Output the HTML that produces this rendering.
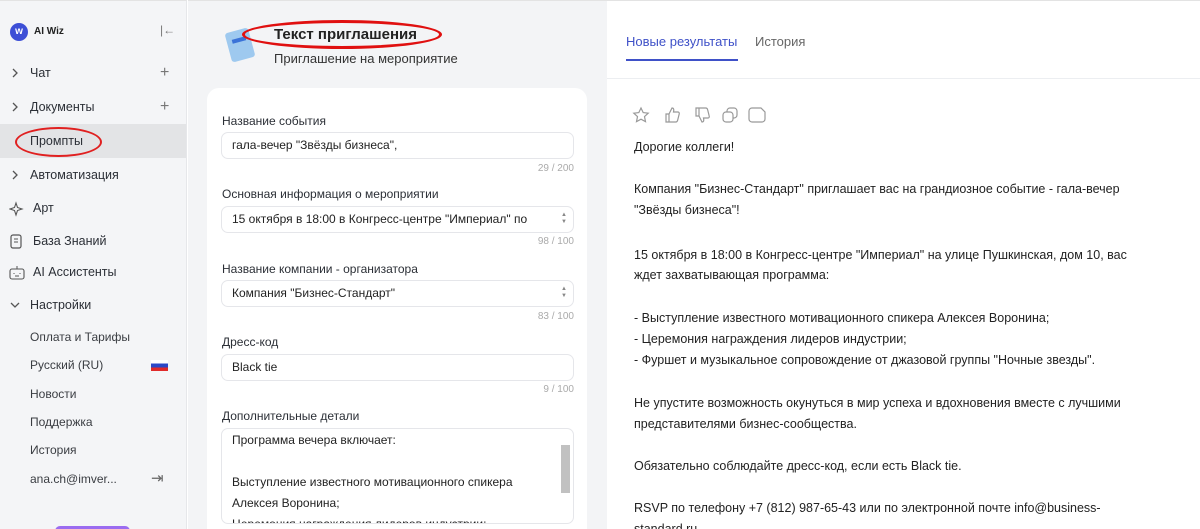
<!DOCTYPE html>
<html><head><meta charset="utf-8"><style>
*{box-sizing:border-box;margin:0;padding:0}
html,body{width:1200px;height:529px;overflow:hidden}
body{font-family:"Liberation Sans",sans-serif;background:#fff;position:relative;color:#1f2328}
.sb{position:absolute;left:0;top:0;width:187px;height:529px;background:#f4f5f7;border-right:1px solid #e6e7ea;border-top:1px solid #e3e3e3}
.it{position:absolute;left:0;width:186px;height:34px;font-size:12.5px;line-height:34px;color:#2b2f36}
.it .l{position:absolute;left:30px}
.it svg{position:absolute;left:9px;top:10px}
.it .p{position:absolute;left:160px;color:#777;font-size:16px}
.sub{position:absolute;left:30px;font-size:12px;color:#3a3d42}
.mid{position:absolute;left:188px;top:0;width:419px;height:529px;background:#f3f4f6;border-top:1px solid #e3e3e3}
.card{position:absolute;left:207px;top:88px;width:380px;height:441px;background:#fff;border-radius:12px 12px 0 0}
.lab{position:absolute;left:222px;font-size:12px;color:#2b2f36}
.inp{position:absolute;left:221px;width:353px;height:27px;border:1px solid #e5e6ea;border-radius:7px;font-size:12px;line-height:25px;padding-left:10px;color:#222}
.cnt{position:absolute;right:626px;font-size:10px;color:#aaa}
.arr{position:absolute;right:4px;width:8px;font-size:6px;color:#888;line-height:7px;top:5px}
.rp{position:absolute;left:607px;top:0;width:593px;height:529px;background:#fff;border-top:1px solid #e3e3e3}
.txt{position:absolute;left:634px;font-size:12.5px;color:#222;white-space:nowrap}
</style></head><body>
<div class="sb">
 <div style="position:absolute;left:10px;top:22px;width:18px;height:18px;border-radius:50%;background:#3d4fd6;color:#fff;font-size:10px;font-weight:bold;text-align:center;line-height:18px">w</div>
 <div style="position:absolute;left:34px;top:25px;font-size:10px;font-weight:bold;color:#222">AI Wiz</div>
 <div style="position:absolute;left:160px;top:22px;font-size:12px;color:#777">|←</div>
 <div class="it" style="top:55px"><svg width="12" height="14" viewBox="0 0 12 14"><path d="M4 3l4 4-4 4" fill="none" stroke="#555" stroke-width="1.3"/></svg><span class="l">Чат</span><span class="p">+</span></div>
 <div class="it" style="top:89px"><svg width="12" height="14" viewBox="0 0 12 14"><path d="M4 3l4 4-4 4" fill="none" stroke="#555" stroke-width="1.3"/></svg><span class="l">Документы</span><span class="p">+</span></div>
 <div class="it" style="top:123px;background:#e3e4e6"><span class="l">Промпты</span></div>
 <div style="position:absolute;left:15px;top:126px;width:87px;height:30px;border:2px solid #e02020;border-radius:50%"></div>
 <div class="it" style="top:157px"><svg width="12" height="14" viewBox="0 0 12 14"><path d="M4 3l4 4-4 4" fill="none" stroke="#555" stroke-width="1.3"/></svg><span class="l">Автоматизация</span></div>
 <div class="it" style="top:190px"><svg width="18" height="16" viewBox="0 0 18 16"><path d="M7 2l1.5 4.5L13 8l-4.5 1.5L7 14 5.5 9.5 1 8l4.5-1.5z" fill="none" stroke="#555" stroke-width="1.1"/></svg><span class="l" style="left:33px">Арт</span></div>
 <div class="it" style="top:223px"><svg width="14" height="16" viewBox="0 0 14 16"><rect x="2" y="1" width="10" height="13" rx="2" fill="none" stroke="#555" stroke-width="1.2"/><path d="M5 5h4M5 8h4" stroke="#555"/></svg><span class="l" style="left:33px">База Знаний</span></div>
 <div class="it" style="top:254px"><svg width="16" height="16" viewBox="0 0 16 16"><rect x="1" y="4" width="14" height="10" rx="2" fill="none" stroke="#555" stroke-width="1.1"/><path d="M8 1v3M5 8v1M11 8v1M6 11h4" stroke="#555"/></svg><span class="l" style="left:33px">AI Ассистенты</span></div>
 <div class="it" style="top:287px"><svg width="12" height="14" viewBox="0 0 12 14"><path d="M2 5l4 4 4-4" fill="none" stroke="#555" stroke-width="1.3"/></svg><span class="l">Настройки</span></div>
 <div class="sub" style="top:329px">Оплата и Тарифы</div>
 <div class="sub" style="top:357px">Русский (RU)</div>
 <div style="position:absolute;left:151px;top:359px;width:17px;height:11px;background:linear-gradient(#fff 0 33%,#2b48c7 33% 66%,#e02a2a 66%)"></div>
 <div class="sub" style="top:386px">Новости</div>
 <div class="sub" style="top:414px">Поддержка</div>
 <div class="sub" style="top:442px">История</div>
 <div class="sub" style="top:471px">ana.ch@imver...</div>
 <div style="position:absolute;left:151px;top:468px;font-size:15px;color:#666">⇥</div>
 <div style="position:absolute;left:55px;top:525px;width:75px;height:10px;border-radius:6px;background:#9b6cf0"></div>
</div>
<div class="mid"></div>
<div style="position:absolute;left:228px;top:30px;width:24px;height:30px;background:#9ec9ef;border-radius:3px;transform:rotate(-15deg)"></div>
<div style="position:absolute;left:232px;top:38px;width:14px;height:4px;background:#3a72d8;transform:rotate(-15deg)"></div>
<div style="position:absolute;left:274px;top:26px;font-size:15px;font-weight:bold;color:#222">Текст приглашения</div>
<div style="position:absolute;left:242px;top:20px;width:200px;height:29px;border:3px solid #e01010;border-radius:50%"></div>
<div style="position:absolute;left:274px;top:51px;font-size:13px;color:#333">Приглашение на мероприятие</div>
<div class="card"></div>
<div class="lab" style="top:114px">Название события</div>
<div class="inp" style="top:132px">гала-вечер "Звёзды бизнеса",</div>
<div class="cnt" style="top:163px">29 / 200</div>
<div class="lab" style="top:187px">Основная информация о мероприятии</div>
<div class="inp" style="top:206px">15 октября в 18:00 в Конгресс-центре "Империал" по<div class="arr">▲<br>▼</div></div>
<div class="cnt" style="top:236px">98 / 100</div>
<div class="lab" style="top:262px">Название компании - организатора</div>
<div class="inp" style="top:280px">Компания "Бизнес-Стандарт"<div class="arr">▲<br>▼</div></div>
<div class="cnt" style="top:311px">83 / 100</div>
<div class="lab" style="top:335px">Дресс-код</div>
<div class="inp" style="top:354px">Black tie</div>
<div class="cnt" style="top:384px">9 / 100</div>
<div class="lab" style="top:409px">Дополнительные детали</div>
<div class="inp" style="top:428px;height:96px;line-height:21px;padding-top:1px;overflow:hidden">Программа вечера включает:<br><br>Выступление известного мотивационного спикера<br>Алексея Воронина;<br>Церемония награждения лидеров индустрии;
 <div style="position:absolute;right:3px;top:16px;width:9px;height:48px;background:#c1c1c1"></div></div>
<div class="rp">
 <div style="position:absolute;left:0;top:77px;width:593px;height:1px;background:#eceef1"></div>
 <div style="position:absolute;left:19px;top:33px;font-size:13px;color:#3f51c8">Новые результаты</div>
 <div style="position:absolute;left:19px;top:58px;width:112px;height:2px;background:#3f51c8"></div>
 <div style="position:absolute;left:148px;top:33px;font-size:13px;color:#666">История</div>
 <svg style="position:absolute;left:25px;top:105px" width="140" height="18" viewBox="0 0 140 18" fill="none" stroke="#999" stroke-width="1.2">
  <path d="M9 2l2.2 4.6 5 .6-3.7 3.4 1 5L9 13.2 4.5 15.6l1-5L1.8 7.2l5-.6z"/>
  <path d="M34 8h3v8h-3zM37 8l3-6c2 0 2 2 1.5 4H46c1 0 1.5 1 1.2 2l-1.5 6c-.2 1-1 2-2 2H37"/>
  <path d="M64 10h3V2h-3zM67 10l3 6c2 0 2-2 1.5-4H76c1 0 1.5-1 1.2-2l-1.5-6c-.2-1-1-2-2-2H67"/>
  <rect x="95" y="2" width="10" height="10" rx="3"/><rect x="91" y="6" width="10" height="10" rx="3" fill="#fff"/>
  <path d="M120 2h9l4 4v7a3 3 0 0 1-3 3h-10a3 3 0 0 1-3-3V5a3 3 0 0 1 3-3z"/>
 </svg>
</div>
<div class="txt" style="top:140px">Дорогие коллеги!</div>
<div class="txt" style="top:182px">Компания "Бизнес-Стандарт" приглашает вас на грандиозное событие - гала-вечер</div>
<div class="txt" style="top:203px">"Звёзды бизнеса"!</div>
<div class="txt" style="top:248px">15 октября в 18:00 в Конгресс-центре "Империал" на улице Пушкинская, дом 10, вас</div>
<div class="txt" style="top:268px">ждет захватывающая программа:</div>
<div class="txt" style="top:311px">- Выступление известного мотивационного спикера Алексея Воронина;</div>
<div class="txt" style="top:332px">- Церемония награждения лидеров индустрии;</div>
<div class="txt" style="top:353px">- Фуршет и музыкальное сопровождение от джазовой группы "Ночные звезды".</div>
<div class="txt" style="top:396px">Не упустите возможность окунуться в мир успеха и вдохновения вместе с лучшими</div>
<div class="txt" style="top:417px">представителями бизнес-сообщества.</div>
<div class="txt" style="top:459px">Обязательно соблюдайте дресс-код, если есть Black tie.</div>
<div class="txt" style="top:501px">RSVP по телефону +7 (812) 987-65-43 или по электронной почте info@business-</div>
<div class="txt" style="top:522px">standard.ru</div>
</body></html>
